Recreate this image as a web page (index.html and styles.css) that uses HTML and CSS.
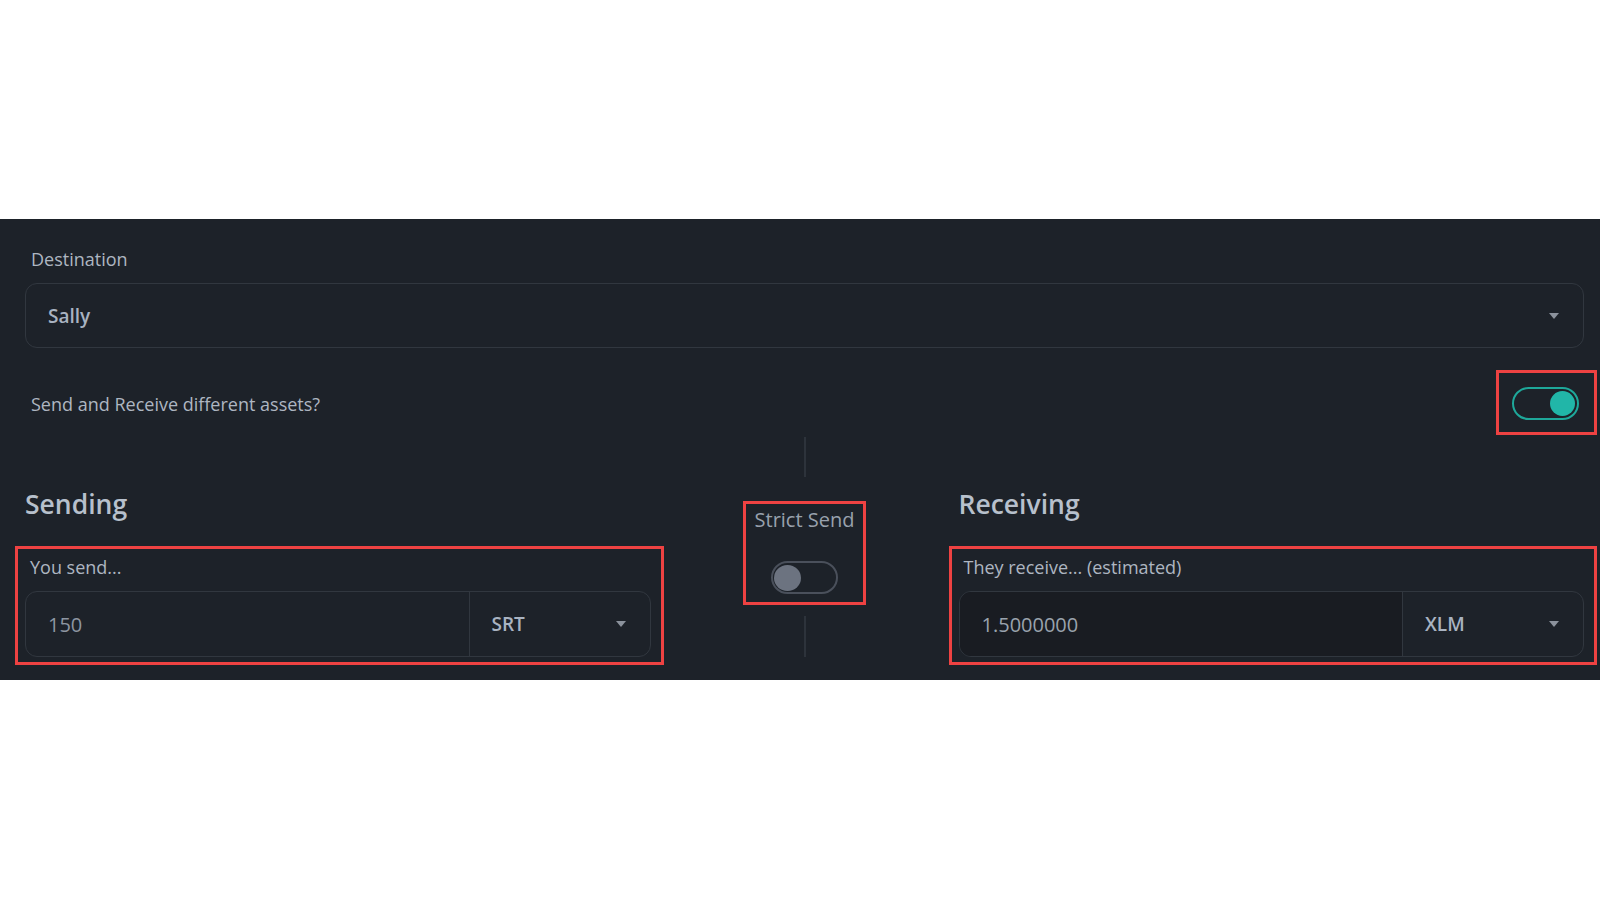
FILE: index.html
```html
<!DOCTYPE html>
<html lang="en">
<head>
<meta charset="utf-8">
<title>Send payment</title>
<link rel="stylesheet" href="styles.css">
</head>
<body>
<div class="panel">
  <div class="field-label">Destination</div>
  <div class="select">
    <span class="select-value">Sally</span>
    <svg class="caret" width="10" height="6" viewBox="0 0 10 6"><polygon points="0,0 10,0 5,6" fill="#8b929c"/></svg>
  </div>

  <div class="toggle-row">
    <span class="toggle-text">Send and Receive different assets?</span>
    <div class="mark mark-toggle">
      <div class="switch switch-on"><span class="knob"></span></div>
    </div>
  </div>

  <div class="columns">
    <div class="col">
      <h2 class="col-title">Sending</h2>
      <div class="mark mark-group">
        <div class="field-label">You send...</div>
        <div class="input-group">
          <div class="amount">150</div>
          <div class="asset">
            <span class="asset-code">SRT</span>
            <svg class="caret" width="10" height="6" viewBox="0 0 10 6"><polygon points="0,0 10,0 5,6" fill="#8b929c"/></svg>
          </div>
        </div>
      </div>
    </div>

    <div class="middle">
      <div class="vline"></div>
      <div class="mark mark-strict">
        <div class="strict-label">Strict Send</div>
        <div class="switch switch-off"><span class="knob"></span></div>
      </div>
      <div class="vline vline-bottom"></div>
    </div>

    <div class="col">
      <h2 class="col-title">Receiving</h2>
      <div class="mark mark-group">
        <div class="field-label">They receive... (estimated)</div>
        <div class="input-group">
          <div class="amount amount-disabled">1.5000000</div>
          <div class="asset">
            <span class="asset-code">XLM</span>
            <svg class="caret" width="10" height="6" viewBox="0 0 10 6"><polygon points="0,0 10,0 5,6" fill="#8b929c"/></svg>
          </div>
        </div>
      </div>
    </div>
  </div>
</div>
</body>
</html>
```

FILE: styles.css
```css
* {
  box-sizing: border-box;
}

html, body {
  margin: 0;
  padding: 0;
  background: #ffffff;
}

body {
  width: 1600px;
  height: 900px;
  font-family: "Open Sans", "Liberation Sans", sans-serif;
  overflow: hidden;
}

.panel {
  margin-top: 219px;
  height: 461px;
  background: #1d2229;
  padding: 28px 16px 0 25px;
}

.field-label {
  font-size: 18px;
  line-height: 24px;
  color: #aeb6c1;
  padding-left: 6px;
}

.select {
  margin-top: 12px;
  height: 65px;
  border: 1px solid #31373f;
  border-radius: 12px;
  display: flex;
  align-items: center;
  justify-content: space-between;
  padding: 0 24px 0 22px;
}

.select-value {
  font-size: 19px;
  font-weight: 600;
  color: #a9b3c1;
}

.caret {
  display: block;
  flex: none;
}

.toggle-row {
  margin-top: 22px;
  height: 65px;
  display: flex;
  align-items: center;
  justify-content: space-between;
}

.toggle-text {
  font-size: 18px;
  line-height: 24px;
  color: #aeb6c1;
  padding-left: 6px;
  padding-top: 3px;
}

.mark {
  border: 3px solid #ee4242;
}

.mark-toggle {
  margin-right: -13px;
  padding: 14px 15px 12px 13px;
}

.switch {
  width: 67px;
  height: 33px;
  border-radius: 17px;
  display: flex;
  align-items: center;
}

.switch-on {
  border: 2px solid #1ea89a;
  justify-content: flex-end;
  padding: 0 2px;
}

.switch-on .knob {
  width: 25px;
  height: 25px;
  border-radius: 50%;
  background: #21b6a8;
}

.switch-off {
  border: 2px solid #4a505b;
  justify-content: flex-start;
  padding: 0 1px;
}

.switch-off .knob {
  width: 27px;
  height: 26px;
  border-radius: 50%;
  background: #6c7380;
}

.columns {
  display: grid;
  grid-template-columns: 1fr 308px 1fr;
}

.col {
  min-width: 0;
}

.col-title {
  margin: 52px 0 0 0;
  font-size: 26.5px;
  line-height: 34px;
  font-weight: 600;
  color: #b7c0cc;
}

.mark-group {
  margin: 25px -13px 0 -10px;
  padding: 6px 10px 5px 7px;
}

.mark-group .field-label {
  padding-left: 5px;
}

.input-group {
  margin-top: 12px;
  height: 66px;
  display: flex;
  border: 1px solid #31373f;
  border-radius: 12px;
  overflow: hidden;
}

.amount {
  flex: 1;
  display: flex;
  align-items: center;
  padding-left: 22px;
  font-size: 20px;
  color: #8d96a1;
}

.amount-disabled {
  background: #191c22;
  color: #9aa3ad;
}

.asset {
  flex: none;
  width: 181px;
  border-left: 1px solid #31373f;
  display: flex;
  align-items: center;
  justify-content: space-between;
  padding: 0 24px 0 22px;
}

.asset-code {
  font-size: 19px;
  font-weight: 600;
  color: #a9b3c1;
}

.middle {
  display: flex;
  flex-direction: column;
  align-items: center;
  padding-top: 2px;
}

.vline {
  width: 2px;
  height: 40px;
  background: #2d333b;
}

.vline-bottom {
  margin-top: 11px;
  height: 41px;
}

.mark-strict {
  margin-top: 24px;
  width: 123px;
  height: 104px;
  padding: 3px 0 0 0;
  display: flex;
  flex-direction: column;
  align-items: center;
}

.strict-label {
  font-size: 20px;
  line-height: 26px;
  color: #98a1ad;
  margin-bottom: 28px;
}
```
